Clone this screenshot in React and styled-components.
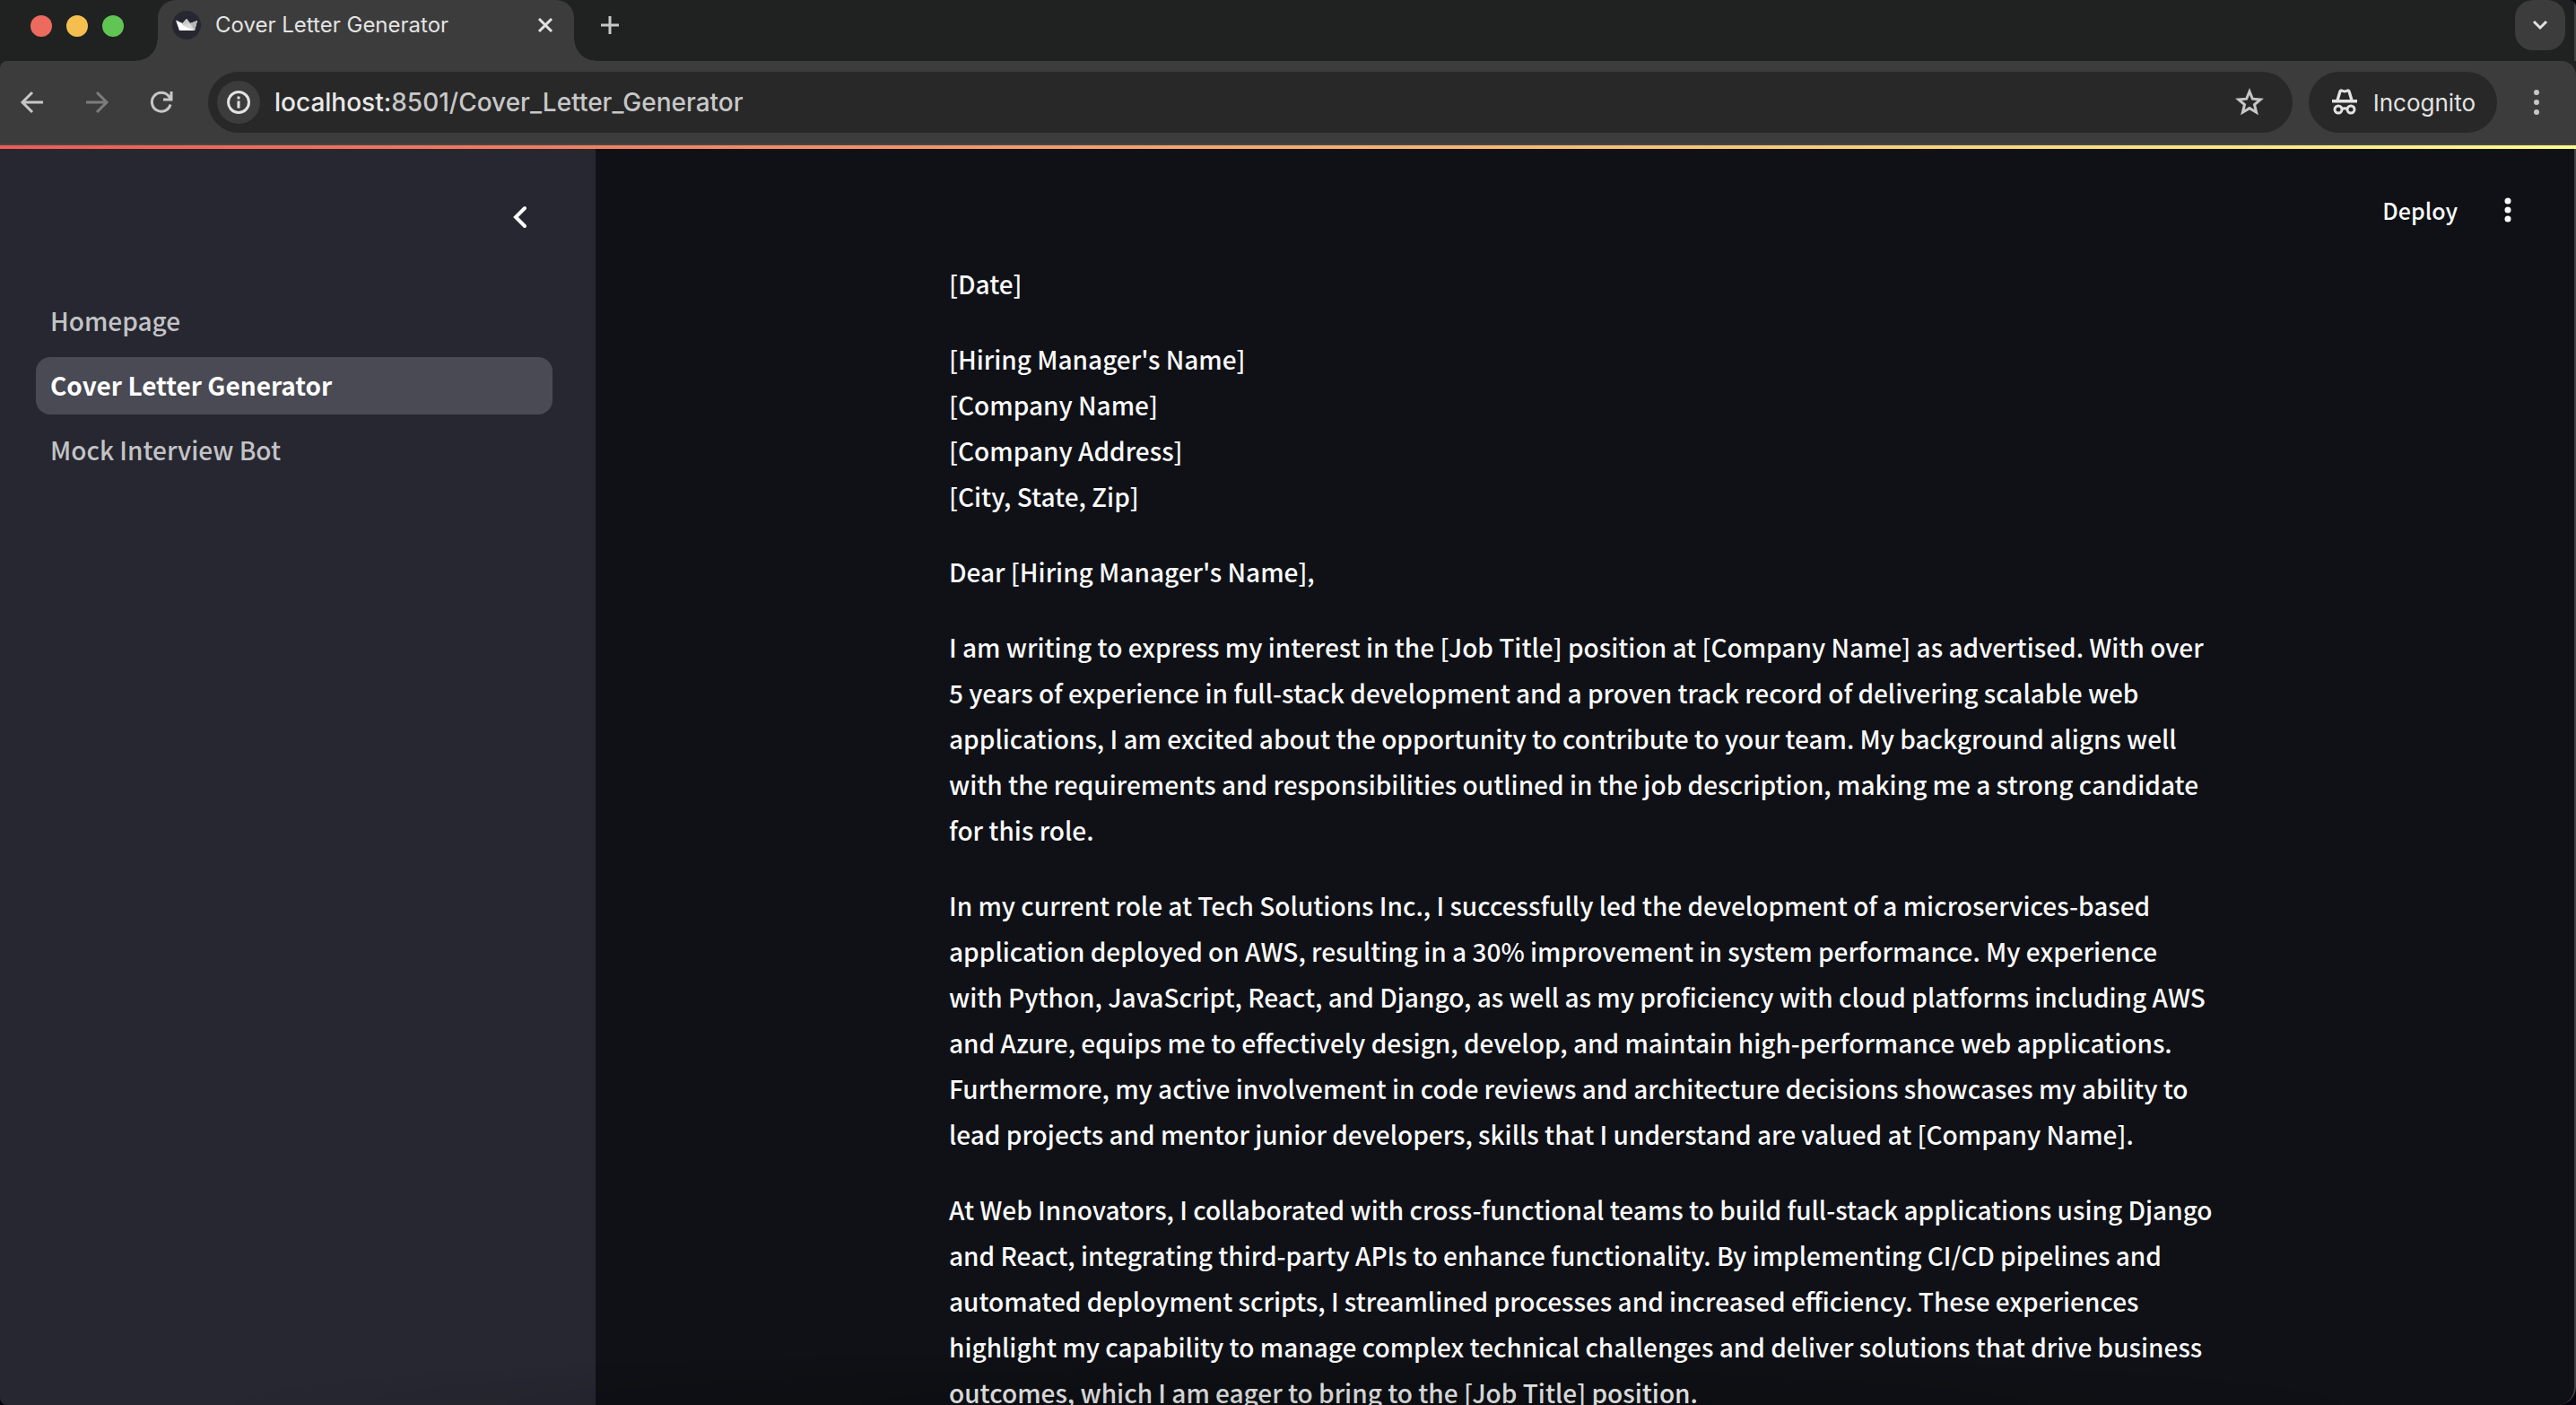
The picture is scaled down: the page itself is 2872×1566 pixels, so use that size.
import React from "react";
import styled, { createGlobalStyle, css } from "styled-components";

const ui = `Inter, "Liberation Sans", sans-serif`;
const body = `"Noto Sans CJK SC", "Noto Sans", sans-serif`;

const Global = createGlobalStyle`
  *, *::before, *::after { box-sizing: border-box; }
  html, body, #root { height: 100%; }
  body { margin: 0; overflow: hidden; background: #07030f; }
  button { border: 0; padding: 0; background: none; color: inherit; font: inherit; cursor: pointer; }
  svg { display: block; flex: none; }
`;

const edge = css`
  border-right: 2px solid #404246;
`;

const Window = styled.div`
  display: flex;
  flex-direction: column;
  height: 100vh;
  overflow: hidden;
  border-radius: 0 8px 20px 8px;
  background: #202221;
`;

const TabStrip = styled.div`
  display: flex;
  flex: none;
  height: 68px;
  padding: 0 10px 0 34px;
  font-family: ${ui};
  ${edge}
`;

const Lights = styled.div`
  display: flex;
  gap: 16px;
  padding-top: 17px;
  width: 142px;
`;

const Light = styled.button`
  && { width: 24px; height: 24px; border-radius: 50%; background: ${(p) => p.$color}; }
`;

const Tab = styled.div`
  position: relative;
  display: flex;
  width: 464px;
  height: 68px;
  padding: 0 14px 12px 16px;
  align-items: center;
  border-radius: 20px 20px 0 0;
  margin-right: 12px;
  background: #3c3c3c;
  color: #e3e3e3;
  font-size: 24px;
  line-height: 28px;
  &::before, &::after {
    content: "";
    position: absolute;
    bottom: 0;
    width: 24px;
    height: 24px;
  }
  &::before { right: 100%; background: radial-gradient(circle at 0 0, transparent 23px, #3c3c3c 24px); }
  &::after { left: 100%; background: radial-gradient(circle at 100% 0, transparent 23px, #3c3c3c 24px); }
`;

const TabTitle = styled.span`
  flex: 1;
  margin-left: 16px;
`;

const StripButton = styled.button`
  display: flex;
  height: 56px;
  width: 56px;
  align-items: center;
  justify-content: center;
  border-radius: 20px;
  ${(p) => p.$filled && css`
    && { margin-left: auto; background: #3c3c3c; }
  `}
`;

const Toolbar = styled.div`
  display: flex;
  flex: none;
  align-items: center;
  height: 94px;
  padding: 0 20px 0 12px;
  border-bottom: 2px solid #474747;
  border-radius: 8px 16px 0 0;
  background: #3c3c3c;
  color: #c7c7c7;
  font-family: ${ui};
`;

const NavButton = styled.button`
  display: flex;
  width: 48px;
  height: 48px;
  margin-right: 24px;
  align-items: center;
  justify-content: center;
  && { color: ${(p) => (p.$dim ? "#7c7c7c" : "#c7c7c7")}; }
`;

const AddressBar = styled.div`
  display: flex;
  flex: 1;
  align-items: center;
  height: 68px;
  margin-left: 4px;
  padding: 0 32px 0 10px;
  border-radius: 34px;
  background: #282828;
`;

const SiteInfo = styled.button`
  display: flex;
  width: 48px;
  height: 48px;
  margin-right: 16px;
  align-items: center;
  justify-content: center;
  border-radius: 50%;
  && { background: #3c3c3c; color: #e3e3e3; }
`;

const Url = styled.span`
  flex: 1;
  color: #c7c7c7;
  font-size: 28px;
  font-weight: 500;
  line-height: 36px;
  b { color: #e8e8e8; font-weight: 500; }
`;

const Incognito = styled.button`
  display: flex;
  align-items: center;
  gap: 16px;
  height: 68px;
  margin-left: 18px;
  && { padding: 0 24px; background: #282828; color: #e3e3e3; font-size: 26px; }
  border-radius: 34px;
`;

const MenuButton = styled.button`
  display: flex;
  width: 48px;
  height: 48px;
  margin-left: 20px;
  align-items: center;
  justify-content: center;
`;

const Decoration = styled.div`
  flex: none;
  height: 4px;
  background: linear-gradient(90deg, #ef5b53, #fbfa8a);
`;

const AppShell = styled.div`
  display: flex;
  flex: 1;
  min-height: 0;
  border-radius: 0 0 20px 8px;
  background: #0f1116;
  font-family: ${body};
  font-weight: 500;
  ${edge}
`;

const Sidebar = styled.aside`
  display: flex;
  flex: none;
  flex-direction: column;
  width: 664px;
  padding: 48px 48px 0 40px;
  background: #262730;
`;

const Collapse = styled.button`
  display: flex;
  align-self: flex-end;
  width: 56px;
  height: 56px;
  margin-right: 8px;
  align-items: center;
  justify-content: center;
  && { color: #fff; }
`;

const Nav = styled.nav`
  display: flex;
  flex-direction: column;
  gap: 8px;
  margin-top: 56px;
`;

const NavLink = styled.a`
  padding: 0 16px 2px;
  border-radius: 16px;
  color: #c3c3c6;
  font-size: 28px;
  line-height: 62px;
  text-decoration: none;
  ${(p) => p.$active && css`
    background: #494a54;
    color: #fff;
    font-weight: 700;
  `}
`;

const Main = styled.main`
  display: flex;
  flex: 1;
  flex-direction: column;
  min-width: 0;
  padding-right: 8px;
  overflow: hidden;
  color: #fafafa;
`;

const Header = styled.header`
  display: flex;
  flex: none;
  align-items: center;
  justify-content: flex-end;
  gap: 28px;
  height: 136px;
  padding: 0 38px 0 0;
`;

const Deploy = styled.button`
  && { font-size: 25px; line-height: 36px; }
`;

const AppMenu = styled.button`
  display: flex;
  width: 56px;
  height: 56px;
  align-items: center;
  justify-content: center;
`;

const Letter = styled.article`
  display: flex;
  flex-direction: column;
  gap: 33px;
  width: 100%;
  max-width: 1410px;
  margin: -11px auto 0;
  font-size: 28px;
  line-height: 51px;
`;

const Paragraph = styled.p`
  flex: none;
  margin: 0;
`;

const Fade = styled.div`
  position: fixed;
  inset: auto 240px 0;
  height: 60px;
  background: radial-gradient(ellipse at 50% 100%, rgba(0, 0, 0, 0.2), transparent 70%);
  pointer-events: none;
`;

const stroke = { fill: "none", stroke: "currentColor" };

const Crown = () => (
  <svg width="32" height="32" viewBox="0 0 32 32">
    <circle cx="16" cy="16" r="16" fill="#262730" />
    <path d="M4 10.500l7.500 3.500L16 9l4 5 8-3-3 11H8z" fill="#fff" />
    <path d="M16 9l4 5-8 2-1-1.500z" fill="#c9c9c9" />
    <path d="M28 11l-8 3-8 2 13 6z" fill="#b5b5b5" />
    <path d="M12 16l8-2 5 8z" fill="#dadada" />
  </svg>
);

const Dots = ({ r, step }) => (
  <svg width="32" height="32" viewBox="0 0 32 32" fill="currentColor">
    {[-1, 0, 1].map((i) => <circle key={i} cx="16" cy={16 + i * step} r={r} />)}
  </svg>
);

const letter = [
  ["[Date]"],
  ["[Hiring Manager's Name]", "[Company Name]", "[Company Address]", "[City, State, Zip]"],
  ["Dear [Hiring Manager's Name],"],
  ["I am writing to express my interest in the [Job Title] position at [Company Name] as advertised. With over 5 years of experience in full-stack development and a proven track record of delivering scalable web applications, I am excited about the opportunity to contribute to your team. My background aligns well with the requirements and responsibilities outlined in the job description, making me a strong candidate for this role."],
  ["In my current role at Tech Solutions Inc., I successfully led the development of a microservices-based application deployed on AWS, resulting in a 30% improvement in system performance. My experience with Python, JavaScript, React, and Django, as well as my proficiency with cloud platforms including AWS and Azure, equips me to effectively design, develop, and maintain high-performance web applications. Furthermore, my active involvement in code reviews and architecture decisions showcases my ability to lead projects and mentor junior developers, skills that I understand are valued at [Company Name]."],
  ["At Web Innovators, I collaborated with cross-functional teams to build full-stack applications using Django and React, integrating third-party APIs to enhance functionality. By implementing CI/CD pipelines and automated deployment scripts, I streamlined processes and increased efficiency. These experiences highlight my capability to manage complex technical challenges and deliver solutions that drive business outcomes, which I am eager to bring to the [Job Title] position."],
];

export default function App() {
  return (
    <>
      <Global />
      <Window>
        <TabStrip>
          <Lights>
            <Light $color="#ed6a5e" aria-label="Close window" />
            <Light $color="#f5bf4f" aria-label="Minimize window" />
            <Light $color="#61c554" aria-label="Zoom window" />
          </Lights>
          <Tab>
            <Crown />
            <TabTitle>Cover Letter Generator</TabTitle>
            <button aria-label="Close tab">
              <svg width="36" height="36" viewBox="0 0 36 36" {...stroke} strokeWidth="3"><path d="M11 11l14 14M25 11L11 25" /></svg>
            </button>
          </Tab>
          <StripButton aria-label="New tab">
            <svg width="24" height="24" viewBox="0 0 24 24" {...stroke} stroke="#c7c7c7" strokeWidth="3"><path d="M2 12h20M12 2v20" /></svg>
          </StripButton>
          <StripButton $filled aria-label="Search tabs">
            <svg width="24" height="24" viewBox="0 0 24 24" {...stroke} stroke="#e3e3e3" strokeWidth="3"><path d="M5 8l7 7 7-7" /></svg>
          </StripButton>
        </TabStrip>
        <Toolbar>
          <NavButton aria-label="Back">
            <svg width="28" height="28" viewBox="0 0 28 28" {...stroke} strokeWidth="3"><path d="M26 14H4M14 3L3 14l11 11" /></svg>
          </NavButton>
          <NavButton $dim aria-label="Forward">
            <svg width="28" height="28" viewBox="0 0 28 28" {...stroke} strokeWidth="3"><path d="M2 14h22M14 3l11 11-11 11" /></svg>
          </NavButton>
          <NavButton aria-label="Reload">
            <svg width="28" height="28" viewBox="0 0 28 28" {...stroke} strokeWidth="3"><path d="M24 16.500A10.500 10.500 0 1 1 22 7l2.500 3M25 2v9h-9" /></svg>
          </NavButton>
          <AddressBar>
            <SiteInfo aria-label="Site information">
              <svg width="28" height="28" viewBox="0 0 28 28" {...stroke} strokeWidth="3"><circle cx="14" cy="14" r="11.500" /><path d="M14 12.500v8M14 7.500v3" /></svg>
            </SiteInfo>
            <Url><b>localhost:</b>8501/Cover_Letter_Generator</Url>
            <button aria-label="Bookmark this page">
              <svg width="32" height="32" viewBox="0 0 32 32" {...stroke} strokeWidth="3"><path d="M16 4l3.400 8.200 8.800.7-6.700 5.700 2.100 8.600L16 22.600l-7.600 4.600 2.100-8.600-6.700-5.700 8.800-.7z" /></svg>
            </button>
          </AddressBar>
          <Incognito>
            <svg width="32" height="32" viewBox="0 0 32 32" fill="currentColor">
              <path fillRule="evenodd" d="M2 13h4.500L9.300 3.800C9.800 2 11.500 1 13 1.500l3 1 3-1c1.500-.5 3.200.5 3.700 2.300L25.500 13H30v3.500H2V13zm8 0h12l-2.500-8.500L16 5.500l-3.500-1z" />
              <g {...stroke} strokeWidth="3"><circle cx="9" cy="24" r="4" /><circle cx="23" cy="24" r="4" /><path d="M13 23.500c2-1 4-1 6 0" /></g>
            </svg>
            Incognito
          </Incognito>
          <MenuButton aria-label="Browser menu"><Dots r={3} step={11} /></MenuButton>
        </Toolbar>
        <Decoration />
        <AppShell>
          <Sidebar>
            <Collapse aria-label="Collapse sidebar">
              <svg width="32" height="32" viewBox="0 0 32 32" {...stroke} strokeWidth="4" strokeLinecap="round"><path d="M21 6L11 16l10 10" /></svg>
            </Collapse>
            <Nav>
              <NavLink href="#home">Homepage</NavLink>
              <NavLink href="#cover" $active aria-current="page">Cover Letter Generator</NavLink>
              <NavLink href="#mock">Mock Interview Bot</NavLink>
            </Nav>
          </Sidebar>
          <Main>
            <Header>
              <Deploy>Deploy</Deploy>
              <AppMenu aria-label="App menu"><Dots r={3.500} step={10} /></AppMenu>
            </Header>
            <Letter>
              {letter.map((lines, i) => (
                <Paragraph key={i}>
                  {lines.map((line, j) => <React.Fragment key={j}>{j > 0 && <br />}{line}</React.Fragment>)}
                </Paragraph>
              ))}
            </Letter>
          </Main>
        </AppShell>
      </Window>
      <Fade />
    </>
  );
}
